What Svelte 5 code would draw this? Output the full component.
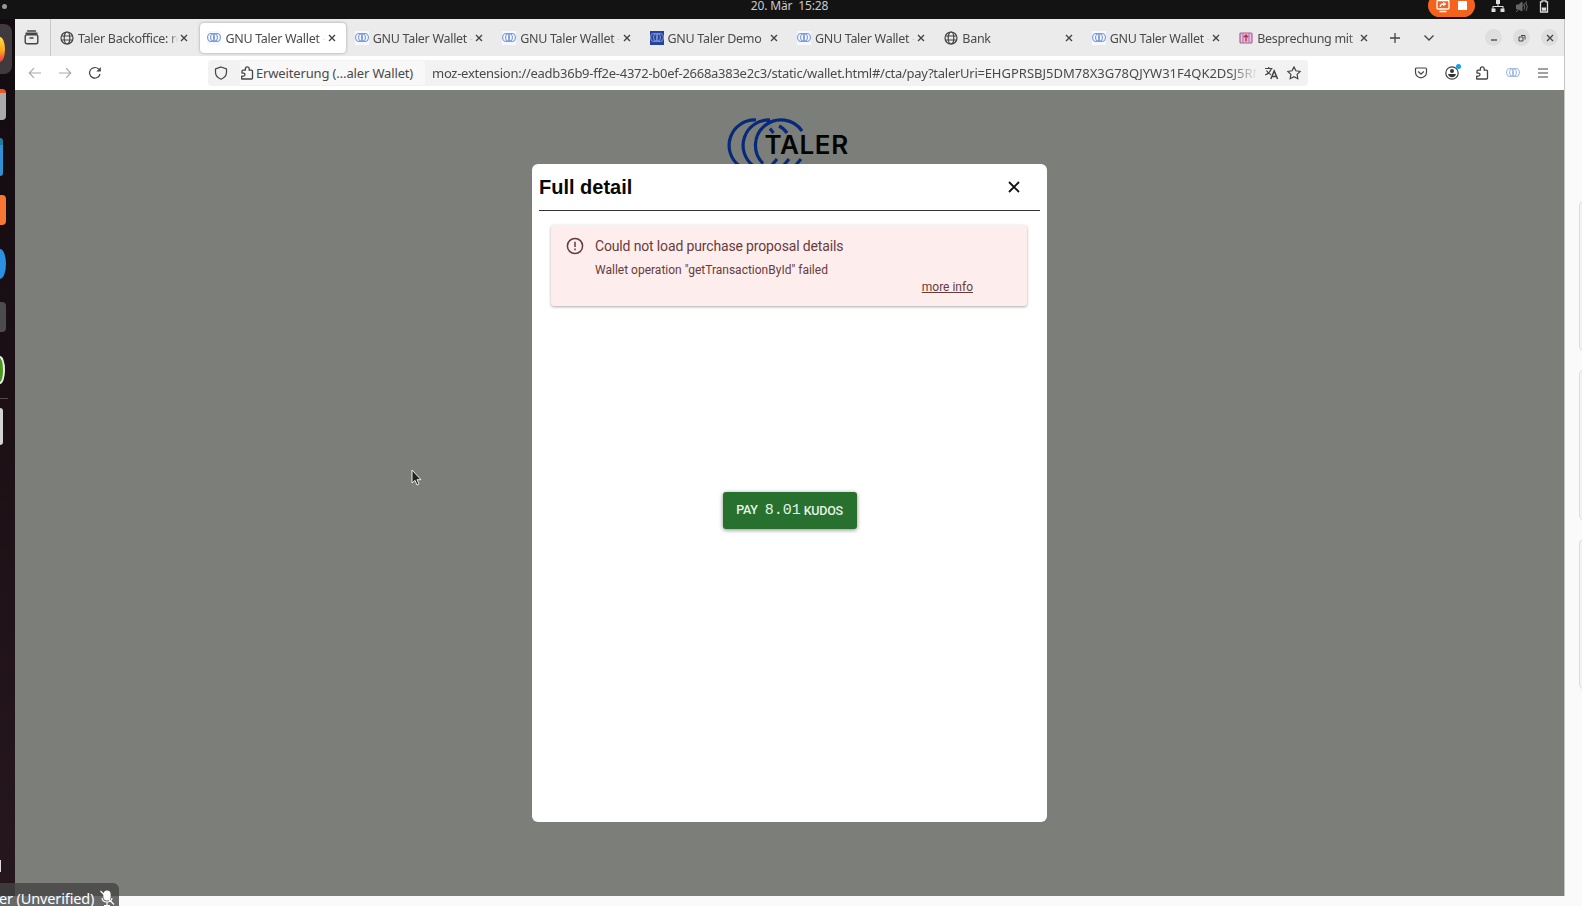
<script lang="ts">
  type Tab = { title: string; icon: 'globe' | 'taler' | 'demo' | 'meet'; active?: boolean };

  const tabs: Tab[] = [
    { title: 'Taler Backoffice: re', icon: 'globe' },
    { title: 'GNU Taler Wallet -', icon: 'taler', active: true },
    { title: 'GNU Taler Wallet -', icon: 'taler' },
    { title: 'GNU Taler Wallet -', icon: 'taler' },
    { title: 'GNU Taler Demo', icon: 'demo' },
    { title: 'GNU Taler Wallet -', icon: 'taler' },
    { title: 'Bank', icon: 'globe' },
    { title: 'GNU Taler Wallet -', icon: 'taler' },
    { title: 'Besprechung mit F', icon: 'meet' }
  ];

  const base =
    'moz-extension://eadb36b9-ff2e-4372-b0ef-2668a383e2c3/static/wallet.html#/cta/pay?talerUri=';
  const uri = 'EHGPRSBJ5DM78X3G78QJYW31F4QK2DSJ5RN';

  const participants = [0, 1, 2];
</script>

{#snippet rings()}
  <svg width="14" height="14" viewBox="0 0 14 14" fill="none" stroke="currentColor" stroke-width="1.1">
    <ellipse cx="4" cy="6.5" rx="3.4" ry="4" /><ellipse cx="7" cy="6.5" rx="3.4" ry="4" /><ellipse cx="10" cy="6.5" rx="3.4" ry="4" />
  </svg>
{/snippet}

{#snippet puzzle()}
  <svg width="14" height="14" viewBox="0 0 14 14" fill="none" stroke="#444" stroke-width="1.3" stroke-linejoin="round">
    <path d="M1.700 13h9.800q1 0 1-1V5.200q0-1-1-1H9.200V2.700a1.900 1.900 0 0 0-3.800 0v1.500H3q-1 0-1 1v1.900h1.500a1.500 1.500 0 0 1 0 3H1.700z" />
  </svg>
{/snippet}

<div class="screen">
  <header class="topbar">
    <i class="dot"></i>
    <span class="clock">20. Mär&nbsp; 15:28</span>
    <div class="status">
      <span class="share">
        <svg width="14" height="14" viewBox="0 0 14 14" fill="none" stroke="#fff" stroke-width="1.3">
          <rect x="1" y="1.5" width="12" height="8.500" rx="1" /><path d="M3.500 12.500h7M4.300 8c0-2 1.200-3 3.200-3" /><path d="M7.200 2.800 10.500 5 7.200 7.200z" fill="#fff" stroke="none" />
        </svg>
        <i></i>
      </span>
      <svg width="14" height="14" viewBox="0 0 14 14" fill="#ddd">
        <path d="M5 0h4v4H5zM.5 8.500h4v3.500h-4zM9.500 8.500h4v3.500h-4zM6.500 4h1v2h5v3h-1V7h-9v2h-1V6h5z" />
      </svg>
      <svg width="14" height="14" viewBox="0 0 14 14" fill="#666" stroke="#666">
        <path d="M1.500 5h2L7 2v9L3.500 9h-2z" /><path d="M9 4.500q1.500 2.500 0 5M11 3q2.500 4 0 8M1 12 12 1.500" fill="none" />
      </svg>
      <svg width="10" height="14" viewBox="0 0 10 14" fill="none" stroke="#ddd" stroke-width="1.3">
        <path d="M3 .8h4v1h1.500V12h-7V1.800H3z" /><path d="M2.800 7.500h4.400v3.200H2.800z" fill="#ddd" stroke="none" />
      </svg>
    </div>
  </header>

  <div class="workspace">
    <aside class="dock">
      <div class="app firefox"><i></i></div>
      <div class="app files"></div>
      <div class="app store"></div>
      <div class="app orange"></div>
      <div class="app blue"></div>
      <div class="app grey"></div>
      <div class="app green"></div>
      <hr />
      <div class="app disk"></div>
      <div class="launcher"></div>
    </aside>

    <main class="browser">
      <div class="tabstrip">
        <div class="view">
          <svg width="15" height="15" viewBox="0 0 15 15" fill="none" stroke="#444" stroke-width="1.4" stroke-linecap="round">
            <path d="M3.500 1h8M2 3.200h11M6 8h3" /><rect x="1.2" y="4.8" width="12.6" height="9" rx="1.8" />
          </svg>
        </div>
        {#each tabs as tab}
          <div class="tab" class:active={tab.active}>
            <span class="favicon {tab.icon}">
              {#if tab.icon === 'globe'}
                <svg width="14" height="14" viewBox="0 0 14 14" fill="none" stroke="#444" stroke-width="1.2">
                  <circle cx="7" cy="7" r="6" /><ellipse cx="7" cy="7" rx="2.8" ry="6" /><path d="M1.300 5h11.400M1.300 9h11.400" />
                </svg>
              {:else if tab.icon === 'meet'}
                <svg width="14" height="14" viewBox="0 0 14 14" fill="none" stroke="#a8609a" stroke-width="1.2">
                  <rect x="1" y="2" width="12" height="10" rx="1" fill="#e3c3dc" /><path d="M4 2v10M10 2v10" stroke="#b878a8" /><path d="M7 10.500V4M5 6.200l2-2.200 2 2.200" stroke="#c22c48" stroke-width="1.4" />
                </svg>
              {:else}
                {@render rings()}
              {/if}
            </span>
            <span class="title">{tab.title}</span>
            <svg class="close" width="8" height="8" viewBox="0 0 8 8"><path d="m1 1 6 6M7 1 1 7" /></svg>
          </div>
        {/each}
        <div class="strip-tools">
          <svg width="12" height="12" viewBox="0 0 12 12"><path d="M6 1v10M1 6h10" /></svg>
          <svg width="12" height="12" viewBox="0 0 12 12"><path d="m1.500 3.500 4.500 4.500 4.500-4.500" /></svg>
        </div>
        <div class="window-buttons">
          <span><svg width="10" height="10" viewBox="0 0 10 10"><path d="M2 7h6" /></svg></span>
          <span><svg width="10" height="10" viewBox="0 0 10 10"><path d="M2 4h4v4H2zM4 2.500h4v4" stroke-width="1" /></svg></span>
          <span><svg width="10" height="10" viewBox="0 0 10 10"><path d="m2 2 6 6M8 2 2 8" /></svg></span>
        </div>
      </div>

      <nav class="toolbar">
        <div class="history">
          <svg class="off" width="14" height="14" viewBox="0 0 14 14"><path d="M13 7H1.500M6 2.200 1.200 7 6 11.800" /></svg>
          <svg class="off" width="14" height="14" viewBox="0 0 14 14"><path d="M1 7h11.500M8 2.200 12.800 7 8 11.800" /></svg>
          <svg width="14" height="14" viewBox="0 0 14 14"><path d="M12 8A5.300 5.300 0 1 1 10.700 3.200" /><path d="M12.800 1v4.500H8.300z" fill="#444" stroke="none" /></svg>
        </div>
        <div class="urlbar">
          <span class="shield">
            <svg width="14" height="14" viewBox="0 0 14 14"><path d="M7 1 12.500 3v3.200q0 4.600-5.500 7-5.500-2.400-5.500-7V3z" /></svg>
          </span>
          <span class="identity">{@render puzzle()}<b>Erweiterung (…aler Wallet)</b></span>
          <span class="url">{base}<span>{uri}</span></span>
          <svg width="15" height="14" viewBox="0 0 15 14"><path d="M1 2.500h7.500M4.700 1v1.500M7.300 2.500Q6 7 1.200 9M2.500 4.500Q4 7.500 7 8.600" /><path d="m6.800 13 3.400-8 3.400 8M8 10.500h4.500" stroke-width="1.5" /></svg>
          <svg class="star" width="14" height="14" viewBox="0 0 14 14"><path d="m7 .9 1.900 3.900 4.300.6-3.100 3 .7 4.300L7 10.700l-3.800 2 .7-4.300-3.100-3 4.300-.6z" /></svg>
        </div>
        <div class="actions">
          <svg width="14" height="14" viewBox="0 0 14 14"><path d="M2.600 2h8.800q1.100 0 1.100 1.100v3.200a5.500 5.500 0 0 1-11 0V3.100Q1.500 2 2.600 2z" /><path d="m4.200 5.500 2.800 2.700 2.800-2.700" /></svg>
          <span class="account">
            <svg width="14" height="14" viewBox="0 0 14 14"><circle cx="7" cy="7" r="6.2" /><circle cx="7" cy="5" r="2" fill="#333" stroke="none" /><path d="M3 8h8q-1 3.300-4 3.300T3 8z" fill="#333" stroke="none" /></svg>
            <i></i>
          </span>
          {@render puzzle()}
          <span class="mini">{@render rings()}</span>
          <svg width="14" height="14" viewBox="0 0 14 14"><path d="M2 3h10M2 7h10M2 11h10" /></svg>
        </div>
      </nav>

      <section class="page">
        <svg class="logo" width="130" height="56" viewBox="0 0 130 56">
          <g fill="none" stroke="#06297a" stroke-width="3.2">
            <path d="M31 4A25.500 25.500 0 0 0 14.500 50M45 4A25.500 25.500 0 0 0 28.500 50M38 47.500A25.500 25.500 0 1 1 77 15" />
            <path d="m45 12.500 3.500 4.500M54 10q4.500 2 8 7M52 43l-5 6M64 43l-5 6M76 43l-5 6" />
          </g>
          <text x="39.500" y="38">TALER</text>
        </svg>
        <div class="modal">
          <div class="modal-head">
            <h1>Full detail</h1>
            <svg width="12" height="12" viewBox="0 0 12 12"><path d="m1 1 10 10M11 1 1 11" /></svg>
          </div>
          <div class="alert">
            <svg width="18" height="18" viewBox="0 0 18 18"><circle cx="9" cy="9" r="7.6" /><path d="M9 4.800v5.200M9 11.400v1.800" /></svg>
            <div class="message">
              <p class="summary">Could not load purchase proposal details</p>
              <p class="reason">Wallet operation "getTransactionById" failed</p>
              <a href="#more">more info</a>
            </div>
          </div>
          <button><span class="pay">PAY</span><b>8.01</b><span>KUDOS</span></button>
        </div>
      </section>
    </main>

    <aside class="side">
      {#each participants as id (id)}
        <div class="card"></div>
      {/each}
    </aside>
  </div>

  <svg class="pointer" width="12" height="18" viewBox="0 0 12 18">
    <path d="M1 1v13l3-2.600 2 4.600 2-1-2-4.300h4z" />
  </svg>
  <div class="speaker">
    <span>er (Unverified)</span>
    <svg width="16" height="16" viewBox="0 0 16 16">
      <rect x="5" y="1" width="6" height="9" rx="3" fill="#fff" /><path d="M3 8q.5 4 5 4t5-4M8 12v3.500M5 15.500h6M1.500 1 15 14.500" />
    </svg>
  </div>
</div>

<style>
  :global(body) {
    margin: 0;
    overflow: hidden;
  }
  .screen {
    position: relative;
    display: flex;
    flex-direction: column;
    width: 1582px;
    height: 906px;
    overflow: hidden;
    background: #fafafa;
    color: #4a4a4a;
    font: 13px 'Noto Sans', sans-serif;
  }
  svg,
  .app,
  .dot {
    flex: none;
  }
  svg {
    display: block;
  }
  .topbar {
    display: grid;
    grid-template-columns: 1fr auto 1fr;
    width: 1565px;
    height: 19px;
    box-sizing: border-box;
    padding-left: 2px;
    overflow: hidden;
    background: #131313;
    color: #ccc;
  }
  .dot {
    width: 5px;
    height: 5px;
    margin-top: 4px;
    border-radius: 50%;
    background: #999;
  }
  .clock {
    font-size: 12px;
    letter-spacing: -0.15px;
    line-height: 12px;
    margin-left: 12px;
    white-space: nowrap;
  }
  .status {
    display: flex;
    justify-content: flex-end;
    gap: 10px;
    padding-right: 16px;
  }
  .share {
    display: flex;
    align-items: center;
    justify-content: center;
    gap: 8px;
    width: 47px;
    height: 23px;
    margin: -6px 6px 0 0;
    border-radius: 12px;
    background: #f4631e;
  }
  .share i {
    width: 9px;
    height: 9px;
    background: #fff;
  }
  .workspace {
    display: flex;
    flex: 1;
    min-height: 0;
  }
  .dock {
    display: flex;
    flex-direction: column;
    width: 15px;
    height: 877px;
    overflow: hidden;
    background: linear-gradient(#110b10, #1c1015 45%, #26171e);
  }
  .app {
    width: 6px;
    height: 30px;
    border-radius: 0 4px 4px 0;
  }
  .firefox {
    display: flex;
    align-items: center;
    width: 12px;
    height: 50px;
    margin-top: 5px;
    border-radius: 0 8px 8px 0;
    background: #403a3e;
  }
  .firefox i {
    width: 5px;
    height: 25px;
    border-radius: 0 100% 100% 0 / 0 50% 50% 0;
    background: linear-gradient(#ffdc38, #ffa71e 55%, #ef3049);
  }
  .files {
    margin-top: 15px;
    height: 27px;
    border-top: 4px solid #e95420;
    background: #aaa;
  }
  .store {
    width: 3px;
    margin-top: 18px;
    height: 31px;
    border-top: 7px solid #287b98;
    background: #2f91d1;
  }
  .orange {
    margin-top: 19px;
    background: #f87534;
  }
  .blue {
    margin-top: 24px;
    border-radius: 0 100% 100% 0 / 0 50% 50% 0;
    background: #2d8fe2;
  }
  .grey {
    margin-top: 23px;
    background: #4c4c4c;
  }
  .green {
    width: 5px;
    height: 28px;
    box-sizing: border-box;
    margin-top: 24px;
    border: 2px solid #eee;
    border-left: 0;
    border-radius: 0 100% 100% 0 / 0 50% 50% 0;
    background: #4b971b;
  }
  hr {
    width: 8px;
    height: 1px;
    margin: 14px 0 9px;
    border: 0;
    background: #54484d;
  }
  .disk {
    width: 3px;
    height: 37px;
    background: #d3d3d3;
  }
  .launcher {
    width: 1px;
    height: 12px;
    margin-top: auto;
    margin-bottom: 24px;
    background: #ddd;
  }
  .browser {
    display: flex;
    flex-direction: column;
    width: 1549px;
    height: 877px;
    border-right: 1px solid #c4c4c4;
  }
  .tabstrip {
    display: flex;
    align-items: center;
    height: 37px;
    background: #ebebeb;
  }
  .view {
    display: flex;
    align-items: center;
    width: 36px;
    height: 37px;
    padding-left: 9px;
    box-sizing: border-box;
    border-right: 1px solid #c8c8c8;
  }
  .tab {
    display: flex;
    align-items: center;
    width: 147.4px;
    height: 30px;
    padding: 0 10px 0 9px;
    box-sizing: border-box;
  }
  .tab.active {
    width: 145.4px;
    margin-left: 2px;
    padding: 0 10px 0 7px;
    border-radius: 4px;
    background: #fff;
    box-shadow: 0 0 3px #999;
  }
  .favicon {
    width: 14px;
    margin-right: 4px;
    color: #7596d8;
  }
  .taler {
    background: #f5f9ff;
  }
  .demo {
    background: #26439d;
    color: #7c93d3;
  }
  .title {
    flex: 1;
    min-width: 0;
    overflow: hidden;
    padding-top: 1px;
    font-size: 12.5px;
    letter-spacing: -0.3px;
    white-space: nowrap;
    mask-image: linear-gradient(90deg, #000 92px, transparent 100px);
  }
  .close {
    fill: none;
    stroke: #444;
    stroke-width: 1.4;
    margin-left: 2px;
  }
  .strip-tools,
  .window-buttons {
    display: flex;
    align-items: center;
    fill: none;
    stroke: #444;
    stroke-width: 1.3;
  }
  .strip-tools {
    gap: 22px;
    margin-left: 11px;
  }
  .window-buttons {
    gap: 11px;
    margin-left: auto;
    padding-right: 6px;
  }
  .window-buttons span {
    display: grid;
    place-items: center;
    width: 17px;
    height: 17px;
    border-radius: 50%;
    background: #dedede;
  }
  .toolbar {
    display: flex;
    align-items: center;
    height: 34px;
    background: #fff;
    fill: none;
    stroke: #444;
    stroke-width: 1.2;
  }
  .history {
    display: flex;
    gap: 16px;
    width: 193px;
    box-sizing: border-box;
    padding-left: 13px;
  }
  .off {
    opacity: 0.45;
  }
  .urlbar {
    display: flex;
    align-items: center;
    width: 1100px;
    height: 26px;
    border-radius: 4px;
    background: #f2f2f2;
  }
  .shield {
    display: grid;
    place-items: center;
    width: 26px;
    height: 26px;
  }
  .identity {
    display: flex;
    align-items: center;
    gap: 2px;
    width: 185px;
    height: 24px;
    margin-left: 6px;
    border-radius: 3px;
    background: #f8f8f8;
    white-space: nowrap;
  }
  .identity b {
    font-weight: 400;
    letter-spacing: -0.15px;
  }
  .url {
    width: 825px;
    margin: 0 7px;
    overflow: hidden;
    letter-spacing: -0.27px;
    white-space: nowrap;
    mask-image: linear-gradient(90deg, #000 798px, transparent 826px);
  }
  .url span {
    letter-spacing: 0;
  }
  .star {
    margin-left: 8px;
  }
  .actions {
    display: flex;
    gap: 16.5px;
    margin-left: auto;
    padding-right: 14px;
    color: #444;
  }
  .account {
    position: relative;
  }
  .account i {
    position: absolute;
    top: -2px;
    right: -2px;
    width: 5px;
    height: 5px;
    border-radius: 50%;
    background: #139ee9;
  }
  .mini {
    color: #9bb8e3;
  }
  .page {
    display: flex;
    flex-direction: column;
    align-items: center;
    flex: 1;
    min-height: 0;
    background: #7c7e7a;
  }
  .logo {
    flex: none;
    margin: 26px 0 -8px;
  }
  .logo text {
    fill: #050505;
    font: 600 26px Inter, sans-serif;
    letter-spacing: 0.6px;
  }
  .modal {
    position: relative;
    display: flex;
    flex-direction: column;
    width: 515px;
    height: 658px;
    padding: 0 7px;
    box-sizing: border-box;
    border-radius: 6px;
    background: #fff;
  }
  .modal-head {
    display: flex;
    align-items: center;
    justify-content: space-between;
    height: 46px;
    padding-right: 20px;
    border-bottom: 1px solid #333;
    fill: none;
    stroke: #111;
    stroke-width: 1.8;
  }
  h1 {
    margin: 0;
    color: #080808;
    font: bold 20px 'Liberation Sans', sans-serif;
  }
  .alert {
    display: flex;
    width: 476px;
    height: 81px;
    margin: 14px 0 0 12px;
    padding: 12px 15px 0;
    box-sizing: border-box;
    border-radius: 3px;
    background: #fdeeed;
    box-shadow: 0 1px 3px #0005;
    color: #683b3b;
    fill: none;
    stroke: #683b3b;
    stroke-width: 1.5;
    font-family: Roboto, sans-serif;
  }
  .message {
    display: flex;
    flex-direction: column;
    flex: 1;
    margin-left: 11px;
  }
  .message p {
    margin: 0;
  }
  .summary {
    font-size: 14px;
    letter-spacing: -0.15px;
    line-height: 18px;
  }
  .reason {
    font-size: 12px;
    line-height: 16px;
    padding-top: 7px;
  }
  .message a {
    align-self: flex-end;
    margin-right: 39px;
    color: inherit;
    font-size: 12px;
    line-height: 18px;
  }
  button {
    display: flex;
    align-items: center;
    align-self: center;
    justify-content: center;
    width: 134px;
    height: 37px;
    margin-top: 186px;
    padding: 0;
    border: 0;
    border-radius: 3px;
    background: #27702d;
    box-shadow: 0 1px 4px #0007;
    color: #e6f3e6;
    font: 500 12.5px Roboto, sans-serif;
    letter-spacing: -0.25px;
  }
  .pay {
    margin-bottom: 2px;
  }
  button b {
    margin: 0 3px 0 7px;
    font: 15px 'Liberation Mono', monospace;
    letter-spacing: 0;
  }
  .side {
    display: flex;
    flex-direction: column;
    gap: 17px;
    flex: 1;
    padding: 181px 0 0 14px;
    overflow: hidden;
  }
  .card {
    flex: none;
    width: 30px;
    height: 152px;
    box-sizing: border-box;
    border: 1px solid #d7dfdd;
    border-radius: 6px;
    background: #f1f6f4;
  }
  .pointer {
    position: absolute;
    top: 469px;
    left: 411px;
    fill: #222;
    stroke: #eee;
  }
  .speaker {
    position: absolute;
    bottom: 0;
    left: 0;
    display: flex;
    align-items: center;
    width: 119px;
    height: 23px;
    padding-top: 7px;
    gap: 5px;
    box-sizing: border-box;
    border-radius: 0 6px 0 0;
    background: #444c;
    color: #fff;
    font-size: 14.5px;
    letter-spacing: -0.13px;
    white-space: nowrap;
    fill: none;
    stroke: #fff;
    stroke-width: 1.2;
  }
  .speaker span {
    margin-left: -1px;
  }
</style>
